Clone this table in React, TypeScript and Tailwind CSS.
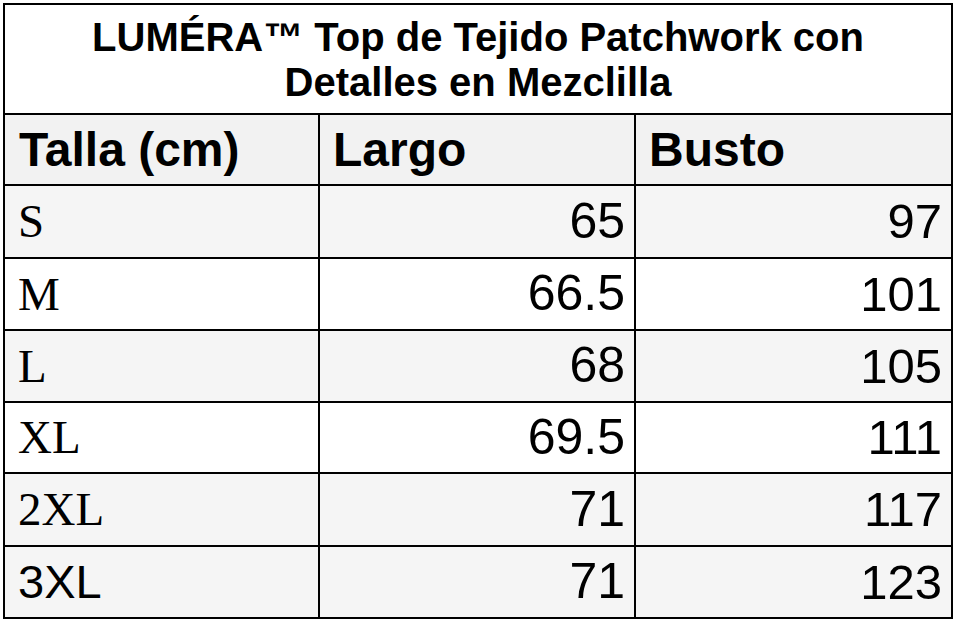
import React from "react";

const rows = [
  { size: "S", largo: "65", busto: "97", bg: "bg-[#f5f5f5]", serif: true, h: "h-[73px]" },
  { size: "M", largo: "66.5", busto: "101", bg: "bg-white", serif: true, h: "h-[72px]" },
  { size: "L", largo: "68", busto: "105", bg: "bg-[#f5f5f5]", serif: true, h: "h-[72px]" },
  { size: "XL", largo: "69.5", busto: "111", bg: "bg-white", serif: true, h: "h-[71px]" },
  { size: "2XL", largo: "71", busto: "117", bg: "bg-[#f5f5f5]", serif: true, h: "h-[73px]" },
  { size: "3XL", largo: "71", busto: "123", bg: "bg-[#f5f5f5]", serif: false, h: "h-[72px]" },
];

export default function App() {
  return (
    <div className="w-[956px] h-[622px] bg-white pl-[3px] pt-[3px] font-['Liberation_Sans',Arial,sans-serif] text-black">
      <div className="w-[950px] border-2 border-black flex flex-col overflow-hidden">
        <div className="h-[108px] shrink-0 bg-white flex flex-col items-center justify-center text-[40px] font-bold leading-[45px] text-center pt-[1px]">
          <div>LUMÉRA™ Top de Tejido Patchwork con</div>
          <div>Detalles en Mezclilla</div>
        </div>
        <div className="grid grid-cols-[313px_316px_317px] grid-rows-1 h-[71px] shrink-0 border-t-2 border-black bg-[#f2f2f2] text-[48px] leading-[1.15] font-bold">
          <div className="flex items-center pl-[14px]">Talla (cm)</div>
          <div className="flex items-center pl-[13px] border-l-2 border-black">Largo</div>
          <div className="flex items-center pl-[13px] border-l-2 border-black">Busto</div>
        </div>
        {rows.map((r) => (
          <div
            key={r.size}
            className={`grid grid-cols-[313px_316px_317px] grid-rows-1 shrink-0 ${r.h} border-t-2 border-black ${r.bg} leading-[1.15]`}
          >
            <div
              className={`flex items-center pl-[13px] text-[47px] ${
                r.serif ? "font-['Liberation_Serif','Times_New_Roman',serif]" : ""
              }`}
            >
              {r.size}
            </div>
            <div className="flex items-center justify-end pr-[9px] text-[50px] border-l-2 border-black">
              {r.largo}
            </div>
            <div className="flex items-center justify-end pr-[9px] text-[49px] border-l-2 border-black">
              {r.busto}
            </div>
          </div>
        ))}
      </div>
    </div>
  );
}
